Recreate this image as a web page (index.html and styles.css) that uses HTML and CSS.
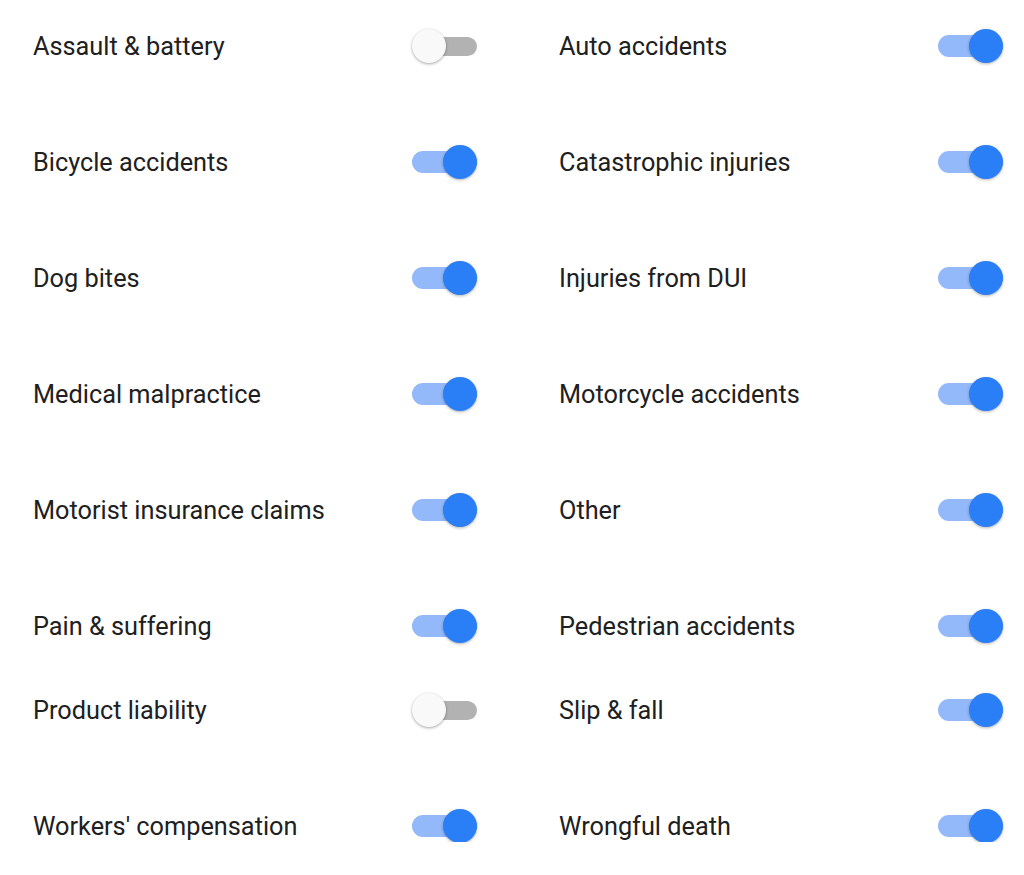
FILE: index.html
```html
<!DOCTYPE html>
<html>
<head>
<meta charset="utf-8">
<link rel="stylesheet" href="styles.css">
</head>
<body>
<div class="list">
  <div class="row">
    <div class="item"><span class="label">Assault &amp; battery</span><span class="switch"><span class="track"></span><span class="thumb"></span></span></div>
    <div class="item"><span class="label">Auto accidents</span><span class="switch on"><span class="track"></span><span class="thumb"></span></span></div>
  </div>
  <div class="row">
    <div class="item"><span class="label">Bicycle accidents</span><span class="switch on"><span class="track"></span><span class="thumb"></span></span></div>
    <div class="item"><span class="label">Catastrophic injuries</span><span class="switch on"><span class="track"></span><span class="thumb"></span></span></div>
  </div>
  <div class="row">
    <div class="item"><span class="label">Dog bites</span><span class="switch on"><span class="track"></span><span class="thumb"></span></span></div>
    <div class="item"><span class="label">Injuries from DUI</span><span class="switch on"><span class="track"></span><span class="thumb"></span></span></div>
  </div>
  <div class="row">
    <div class="item"><span class="label">Medical malpractice</span><span class="switch on"><span class="track"></span><span class="thumb"></span></span></div>
    <div class="item"><span class="label">Motorcycle accidents</span><span class="switch on"><span class="track"></span><span class="thumb"></span></span></div>
  </div>
  <div class="row">
    <div class="item"><span class="label">Motorist insurance claims</span><span class="switch on"><span class="track"></span><span class="thumb"></span></span></div>
    <div class="item"><span class="label">Other</span><span class="switch on"><span class="track"></span><span class="thumb"></span></span></div>
  </div>
  <div class="row">
    <div class="item"><span class="label">Pain &amp; suffering</span><span class="switch on"><span class="track"></span><span class="thumb"></span></span></div>
    <div class="item"><span class="label">Pedestrian accidents</span><span class="switch on"><span class="track"></span><span class="thumb"></span></span></div>
  </div>
  <div class="row tight">
    <div class="item"><span class="label">Product liability</span><span class="switch"><span class="track"></span><span class="thumb"></span></span></div>
    <div class="item"><span class="label">Slip &amp; fall</span><span class="switch on"><span class="track"></span><span class="thumb"></span></span></div>
  </div>
  <div class="row">
    <div class="item"><span class="label">Workers' compensation</span><span class="switch on"><span class="track"></span><span class="thumb"></span></span></div>
    <div class="item"><span class="label">Wrongful death</span><span class="switch on"><span class="track"></span><span class="thumb"></span></span></div>
  </div>
</div>
</body>
</html>
```

FILE: styles.css
```css
html, body {
  margin: 0;
  padding: 0;
  background: #ffffff;
}

body {
  font-family: Roboto, "Noto Sans", Arial, sans-serif;
  color: #202020;
}

.list {
  display: flex;
  flex-direction: column;
  padding: 28px 0 0 33px;
}

.row {
  display: grid;
  grid-template-columns: 444px 444px;
  column-gap: 82px;
  height: 34px;
  margin-top: 82px;
}

.row:first-child {
  margin-top: 0;
}

.row.tight {
  margin-top: 50px;
}

.item {
  display: flex;
  align-items: center;
  justify-content: space-between;
}

.label {
  font-size: 25.3px;
  line-height: 34px;
  padding-top: 2px;
}

.switch {
  position: relative;
  width: 65px;
  height: 34px;
  flex: none;
}

.track {
  position: absolute;
  left: 0;
  right: 0;
  top: 6px;
  height: 22px;
  border-radius: 11px;
  background: #b2b2b2;
}

.switch:not(.on) .track {
  top: 8px;
  height: 19px;
  left: 4px;
}

.thumb {
  position: absolute;
  top: 0;
  left: 0;
  width: 34px;
  height: 34px;
  border-radius: 50%;
  background: #f9f9f9;
  box-shadow: 0 1px 3px rgba(0, 0, 0, 0.35);
}

.switch.on .track {
  background: #93b9fb;
}

.switch.on .thumb {
  left: auto;
  right: 0;
  background: #2a7ff7;
  box-shadow: 0 1px 3px rgba(0, 0, 0, 0.3);
}
```
